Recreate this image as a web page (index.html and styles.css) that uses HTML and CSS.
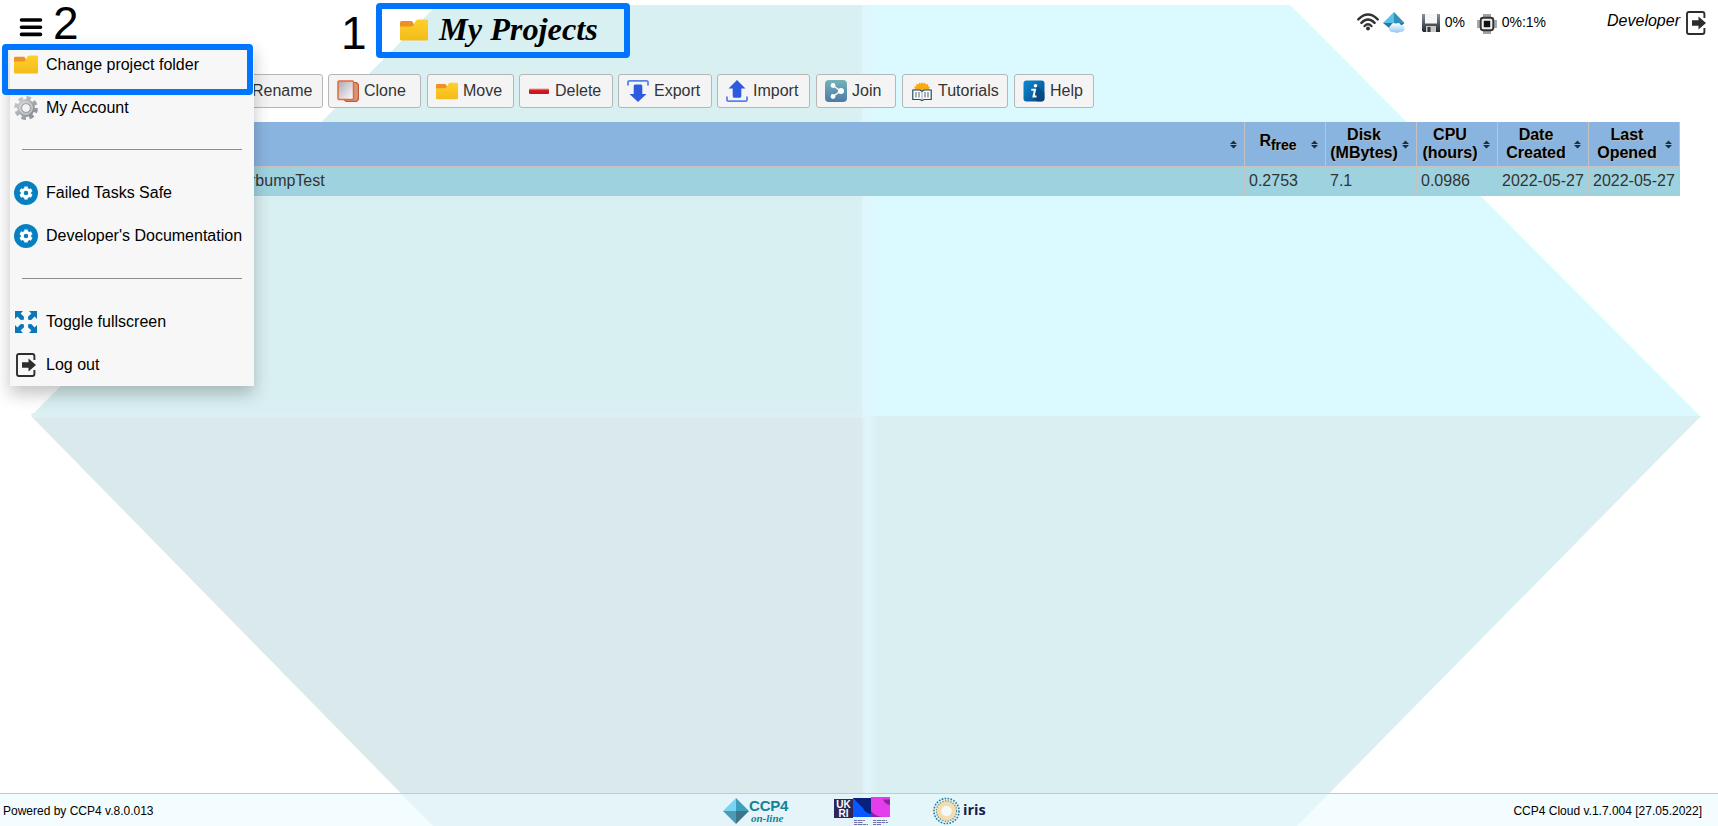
FILE: index.html
```html
<!DOCTYPE html>
<html lang="en">
<head>
<meta charset="utf-8">
<title>CCP4 Cloud - My Projects</title>
<link rel="stylesheet" href="styles.css">
</head>
<body>
<svg class="backdrop" viewBox="0 0 1718 826" aria-hidden="true">
  <defs>
    <linearGradient id="ridge"><stop offset="0" stop-color="#e2f4fa" stop-opacity="0"/><stop offset=".4" stop-color="#e0f6fc"/><stop offset="1" stop-color="#e0f6fc" stop-opacity="0"/></linearGradient>
    <linearGradient id="folderG" x2="0" y2="1"><stop offset="0" stop-color="#ffd02a"/><stop offset="1" stop-color="#f3bb1a"/></linearGradient>
    <linearGradient id="paperG" x1="0" x2="1" y2="1"><stop offset="0" stop-color="#aaa6b4"/><stop offset="1" stop-color="#fff"/></linearGradient>
    <linearGradient id="redG" x2="0" y2="1"><stop offset="0" stop-color="#f4a0a0"/><stop offset=".4" stop-color="#d8121f"/><stop offset="1" stop-color="#c51822"/></linearGradient>
    <linearGradient id="joinG" x2="0" y2="1"><stop offset="0" stop-color="#75b3b5"/><stop offset="1" stop-color="#4c7aa8"/></linearGradient>
    <linearGradient id="helpG" x2="1" y2="1"><stop offset="0" stop-color="#0d8bd6"/><stop offset="1" stop-color="#064684"/></linearGradient>
    <linearGradient id="gearG" x2="1" y2="1"><stop offset="0" stop-color="#c9cdd0"/><stop offset="1" stop-color="#888d91"/></linearGradient>
    <linearGradient id="diskG" x2="0" y2="1"><stop offset="0" stop-color="#8a929d"/><stop offset="1" stop-color="#23272d"/></linearGradient>
    <linearGradient id="cloudG" x2="0" y2="1"><stop offset="0" stop-color="#fff"/><stop offset="1" stop-color="#8ec5f5"/></linearGradient>
  </defs>
  <path fill="#d9f0f2" d="M31 416 437 5H863V416z"/>
  <path fill="#dafaff" d="M863 5H1290L1701 417H863z"/>
  <path fill="#d9e9ec" d="M31 416H863V826H433z"/>
  <path fill="#d9eff2" d="M863 416H1701L1297 826H863z"/>
  <path fill="#dceff5" d="M31 413H863V418H33z"/>
  <path fill="#def8fc" d="M890 379H1663L1667 383H890z" opacity=".6"/>
  <rect x="860" y="5" width="18" height="821" fill="url(#ridge)"/>
</svg>

<svg class="symbols" aria-hidden="true">
  <symbol id="folder" viewBox="0 0 28 22"><path fill="#ee9022" d="M0 3.500Q0 2 1.500 2H12L15 7 12 12H0z"/><path fill="url(#folderG)" d="M0 8.500Q0 7.500 1.500 7.500H11Q12.500 7.500 13.500 6L16 1.500Q17 .4 18.500 .4H26.500Q28 .4 28 2V20Q28 21.600 26.500 21.600H1.500Q0 21.600 0 20z"/></symbol>
  <symbol id="exit" viewBox="0 0 20 24"><path fill="none" stroke="#2d2d2d" stroke-width="1.900" d="M18.400 7V3Q18.400 1 16.400 1H3Q1 1 1 3V21Q1 23 3 23H16.400Q18.400 23 18.400 21V17"/><path fill="#2d2d2d" d="M6 9.300H12.500V5.400L20 12 12.500 18.600V14.700H6z"/></symbol>
  <symbol id="cog" viewBox="0 0 24 24"><circle cx="12" cy="12" r="12" fill="#0780c2"/><circle cx="12" cy="12" r="3.800" fill="none" stroke="#fff" stroke-width="3"/><path stroke="#fff" stroke-width="3.400" d="M12 5.400V8M12 16V18.600M6.300 8.700 8.500 10M15.500 14 17.700 15.300M6.300 15.300 8.500 14M15.500 10 17.700 8.700"/></symbol>
</svg>

<header class="header">
  <svg class="burger" viewBox="0 0 22 19"><path stroke="#000" stroke-width="3.600" stroke-linecap="round" d="M1.500 2H20.500M1.500 9.200H20.500M1.500 16.400H20.500"/></svg>
  <div class="title"><svg class="title-icon"><use href="#folder"/></svg><h1>My Projects</h1></div>
  <div class="status">
    <svg class="wifi" viewBox="0 0 22 18"><g fill="none" stroke="#333" stroke-width="2.500" stroke-linecap="round"><path d="M1.300 6.300Q11-3.300 20.700 6.300M4.400 9.800Q11 3 17.600 9.800M7.600 13Q11 9.500 14.400 13"/></g><circle cx="11" cy="15.600" r="2" fill="#333"/></svg>
    <svg class="cloud" viewBox="0 0 22 21"><path fill="#58c1e4" d="M11 0V11H0z"/><path fill="#3191ba" d="M11 0 21.500 11H11z"/><path fill="#267aa1" d="M0 11H21.500L11 20z"/><path fill="url(#cloudG)" d="M8.500 20A3.600 3.600 0 0 1 7.700 13.500Q9.500 9.800 13 11.600 16.600 9.600 18 13.300 22.500 14 21.500 17.800 20.500 20.500 17.500 19.800 14 21.800 12 20.200z"/></svg>
    <svg class="floppy" viewBox="0 0 18 18"><path fill="url(#diskG)" d="M0 0H18V18H1.200L0 16.600z"/><path fill="#f4f6f7" d="M3 0H15V9.500H3z"/><path fill="#c4c8ca" d="M4 12H14V18H4z"/><path fill="#343434" d="M5.500 13H8.500V18H5.500z"/></svg>
    <span class="stat disk-stat">0%</span>
    <svg class="chip" viewBox="0 0 20 20"><path stroke="#555" stroke-width="1.100" d="M7 0V20M9 0V20M11 0V20M13 0V20M0 7H20M0 9H20M0 11H20M0 13H20"/><rect x="3.700" y="3.700" width="12.600" height="12.600" rx="2.500" fill="#eee" stroke="#333" stroke-width="1.900"/><rect x="6.800" y="6.800" width="6.400" height="6.400" fill="#111"/></svg>
    <span class="stat">0%:1%</span>
  </div>
  <span class="user">Developer</span>
  <svg class="logout"><use href="#exit"/></svg>
</header>

<nav class="toolbar">
  <button class="btn btn-rename">Rename</button>
  <button class="btn btn-clone"><svg viewBox="0 0 22 22"><path fill="#d8957c" stroke="#c85a32" stroke-width="1.200" d="M7 2.500H19.500L21.400 4.500V19.400L19.500 21.400H9L7 19.400z"/><rect x="1" y="1" width="15.500" height="18.500" rx="1" fill="url(#paperG)" stroke="#e56a36" stroke-width="1.500"/></svg>Clone</button>
  <button class="btn btn-move"><svg><use href="#folder"/></svg>Move</button>
  <button class="btn btn-delete"><svg viewBox="0 0 22 22"><rect x="1" y="8.500" width="20" height="5.500" rx="1" fill="url(#redG)"/></svg>Delete</button>
  <button class="btn btn-export"><svg viewBox="0 0 22 22"><path fill="none" stroke="#5582ed" stroke-width="1.800" d="M1 5.500V2Q1 .9 2.500 .9H19.500Q21 .9 21 2V5.500"/><path fill="#2e5ae0" d="M6.700 6Q6.700 4.500 8 4.500H14Q15.300 4.500 15.300 6V14H19.500L11 22 2.500 14H6.700z"/></svg>Export</button>
  <button class="btn btn-import"><svg viewBox="0 0 22 22"><path fill="none" stroke="#5582ed" stroke-width="1.800" d="M1 16.500V20Q1 21.100 2.500 21.100H19.500Q21 21.100 21 20V16.500"/><path fill="#2e5ae0" d="M6.700 16Q6.700 17.800 8 17.800H14Q15.300 17.800 15.300 16V8.500H19.500L11 0 2.500 8.500H6.700z"/></svg>Import</button>
  <button class="btn btn-join"><svg viewBox="0 0 22 22"><rect width="22" height="22" rx="4" fill="url(#joinG)"/><path fill="none" stroke="#fff" stroke-width="1.400" d="M8 5.500 15.500 11 8 16.500"/><g fill="#fff"><circle cx="8" cy="5.500" r="2.400"/><circle cx="16" cy="11" r="3"/><circle cx="8" cy="16.500" r="2.400"/></g></svg>Join</button>
  <button class="btn btn-tutorials"><svg viewBox="0 0 22 22"><path fill="#fba911" d="M2 10 4 8.500 3 6.500 5.200 6.400 5.200 4 7.300 4.500 8.200 2.400 9.800 3.800 11 2 12.300 3.800 14 2.400 14.800 4.500 17 4 17 6.400 19 6.500 18 8.500 20 10.500V12H2z"/><path fill="#fff" stroke="#204d69" stroke-width="1.200" d="M1.800 10H9L11 11.500 13 10H20.200V19.500H13L11 20.500 9 19.500H1.800z"/><path stroke="#8c949b" stroke-width="1.500" d="M5 12V17.500M8 12V17.500M14 12V17.500M17 12V17.500"/><path stroke="#9aa8b3" d="M11 11.500V20"/></svg>Tutorials</button>
  <button class="btn btn-help"><svg viewBox="0 0 22 22"><rect x=".5" y=".5" width="21" height="21" rx="3" fill="url(#helpG)"/><path fill="#063f75" opacity=".55" d="M13 5 21.500 13V19L19 21.500H14L9 17z"/><circle cx="12.500" cy="5.800" r="1.800" fill="#fff"/><path fill="none" stroke="#fff" stroke-width="2" d="M8.300 9.800H12L10.500 16.500H13.500"/></svg>Help</button>
</nav>

<table class="projects">
  <colgroup><col class="c-name"><col class="c-rfree"><col class="c-disk"><col class="c-cpu"><col class="c-date"><col class="c-date"></colgroup>
  <thead><tr>
    <th><div class="head"><span></span><svg viewBox="0 0 8 9"><path d="M0 3.800 4 0 8 3.800zM0 5.200H8L4 9z"/></svg></div></th>
    <th><div class="head rfree"><span>R<sub>free</sub></span><svg viewBox="0 0 8 9"><path d="M0 3.800 4 0 8 3.800zM0 5.200H8L4 9z"/></svg></div></th>
    <th><div class="head"><span>Disk<br>(MBytes)</span><svg viewBox="0 0 8 9"><path d="M0 3.800 4 0 8 3.800zM0 5.200H8L4 9z"/></svg></div></th>
    <th><div class="head"><span>CPU<br>(hours)</span><svg viewBox="0 0 8 9"><path d="M0 3.800 4 0 8 3.800zM0 5.200H8L4 9z"/></svg></div></th>
    <th><div class="head"><span>Date<br>Created</span><svg viewBox="0 0 8 9"><path d="M0 3.800 4 0 8 3.800zM0 5.200H8L4 9z"/></svg></div></th>
    <th><div class="head"><span>Last<br>Opened</span><svg viewBox="0 0 8 9"><path d="M0 3.800 4 0 8 3.800zM0 5.200H8L4 9z"/></svg></div></th>
  </tr></thead>
  <tbody><tr><td class="name">rbumpTest</td><td>0.2753</td><td>7.1</td><td>0.0986</td><td>2022-05-27</td><td>2022-05-27</td></tr></tbody>
</table>

<footer class="footer">
  <span class="powered">Powered by CCP4 v.8.0.013</span>
  <div class="logos">
    <div class="ccp4"><svg viewBox="0 0 26 26"><path fill="#79d4f3" d="M13 0V13H0z"/><path fill="#3d9fbd" d="M13 0 26 13H13z"/><path fill="#4b9bb6" d="M0 13H13V26z"/><path fill="#3d7586" d="M13 13H26L13 26z"/></svg><div class="ccp4-name"><b>CCP4</b><i>on-line</i></div></div>
    <div class="ukri"><div class="ukri-mark"><span>UK</span><span>RI</span></div><svg viewBox="0 0 37 28"><path fill="#0a58ff" d="M0 1H18V20H0z"/><path fill="#08217c" d="M0 1H18V17Q12 16 10 11z"/><path fill="#e33eea" d="M18 0H37V20H18z"/><path fill="#8a2599" d="M18 14Q23 20 31 20H18zM30 2.500H37V8Q32 7 30 2.500z"/><path stroke="#5f659d" stroke-width=".9" stroke-dasharray="3 .6 5 .5" d="M1 23.500H12M1 25.500H10M1 27.500H15M20 23.500H34M20 25.500H35M20 27.500H28"/></svg></div>
    <div class="iris"><svg viewBox="0 0 28 28"><circle cx="14" cy="14" r="8.300" fill="none" stroke="#f3dcae" stroke-width="5.500"/><circle cx="14" cy="14" r="13" fill="none" stroke="#247ba0" stroke-width="1.700" stroke-dasharray="1.700 1.400"/><circle cx="14" cy="14" r="10.500" fill="none" stroke="#5b91a7" stroke-width="1.300" stroke-dasharray="1.300 1.500"/><circle cx="14" cy="14" r="5.200" fill="#f3f9f8"/></svg><b>iris</b></div>
  </div>
  <span class="version">CCP4 Cloud v.1.7.004 [27.05.2022]</span>
</footer>

<div class="menu">
  <div class="item"><svg class="folder"><use href="#folder"/></svg>Change project folder</div>
  <div class="item"><svg viewBox="0 0 24 24"><circle cx="12" cy="12" r="9.900" fill="none" stroke="url(#gearG)" stroke-width="4" stroke-dasharray="4.400 3.375"/><circle cx="12" cy="12" r="6.900" fill="none" stroke="url(#gearG)" stroke-width="4.200"/><circle cx="12" cy="12" r="6.200" fill="none" stroke="#e0e3e5" stroke-width="1"/><circle cx="12" cy="12" r="4.400" fill="#f4f4f4" stroke="#7f858a" stroke-width=".8"/></svg>My Account</div>
  <div class="separator"></div>
  <div class="item"><svg><use href="#cog"/></svg>Failed Tasks Safe</div>
  <div class="item"><svg><use href="#cog"/></svg>Developer's Documentation</div>
  <div class="separator"></div>
  <div class="item"><svg viewBox="0 0 24 24"><g fill="#0b76b8"><path id="arr" d="M1 1H9L6.600 3.400 10 6.800 9.800 9.800 6.800 10 3.400 6.600 1 9z"/><use href="#arr" transform="rotate(90 12 12)"/><use href="#arr" transform="rotate(180 12 12)"/><use href="#arr" transform="rotate(270 12 12)"/></g></svg>Toggle fullscreen</div>
  <div class="item"><svg><use href="#exit"/></svg>Log out</div>
</div>

<div class="mark mark-title"></div>
<div class="mark mark-menu"></div>
<span class="num num-one">1</span>
<span class="num num-two">2</span>
</body>
</html>
```
FILE: styles.css
```css
* { box-sizing: border-box; }
body {
  margin: 0;
  width: 1718px;
  height: 826px;
  overflow: hidden;
  position: relative;
  display: flex;
  flex-direction: column;
  background: #fff;
  color: #000;
  font: 16px "Liberation Sans", Arial, sans-serif;
}
svg { display: block; flex: none; overflow: visible; }
.backdrop { position: absolute; inset: 0; width: 1718px; height: 826px; z-index: -1; }
.symbols { position: absolute; width: 0; height: 0; }

.header { display: flex; align-items: flex-start; height: 74px; padding: 11px 12px 0 20px; white-space: nowrap; }
.burger { width: 22px; height: 19px; margin-top: 7px; }
.title { display: flex; margin-left: 358px; }
.title-icon { width: 28px; height: 22px; margin: 8px 11px 0 0; }
.title h1 { margin: 0; font: italic bold 32.300px/36px "Liberation Serif", "Times New Roman", serif; }
.status { display: flex; margin-left: auto; }
.wifi { width: 22px; height: 18px; margin-top: 2px; }
.cloud { width: 22px; height: 21px; margin: 1px 16px 0 4px; }
.floppy { width: 18px; height: 18px; margin: 3px 5px 0 1px; }
.stat { font-size: 14px; line-height: 22px; }
.disk-stat { width: 32px; }
.chip { width: 20px; height: 20px; margin: 3px 5px 0 0; }
.user { margin-left: 61px; font-style: italic; line-height: 19px; }
.logout { width: 20px; height: 24px; margin-left: 6px; }

.toolbar { display: flex; gap: 5px; height: 34px; padding-left: 200px; }
.btn {
  display: flex; align-items: center; gap: 5px; height: 34px; padding: 0 0 0 8px;
  border: 1px solid #b6b6b6; border-radius: 3px; background: #f4f4f4;
  color: #333; font: 16px "Liberation Sans", Arial, sans-serif;
}
.btn svg { width: 22px; height: 22px; }
.btn-rename { width: 123px; padding-left: 51px; }
.btn-clone { width: 93px; }
.btn-move { width: 87px; margin-left: 1px; }
.btn-delete { width: 94px; }
.btn-export { width: 94px; }
.btn-import { width: 93px; }
.btn-join { width: 80px; margin-left: 1px; }
.btn-tutorials { width: 106px; margin-left: 1px; }
.btn-help { width: 80px; margin-left: 1px; }

.projects { width: 1670px; margin: 14px 0 0 10px; border-collapse: collapse; table-layout: fixed; }
.c-rfree { width: 81px; }
.c-disk { width: 91px; }
.c-cpu { width: 81px; }
.c-date { width: 91px; }
.projects th, .projects td { border-left: 1px solid #c3c3c3; border-right: 1px solid #c3c3c3; }
.projects th { height: 44px; padding: 0; background: #8ab4e0; line-height: 18px; text-shadow: 1px 1px 1px #bbb; }
.head { display: flex; align-items: center; height: 43px; padding: 0 7px 0 0; }
.head span { flex: 1; }
.head svg { width: 7px; height: 9px; margin-top: 2px; fill: #222f38; }
.head sub { font-size: 14px; line-height: 0; }
.rfree span { padding-bottom: 5px; }
.projects td { height: 29px; padding: 0 0 0 4px; background: #9fd2df; border-top: 1px solid #c3c3c3; border-bottom: 1px solid #c3c3c3; color: #333; }
.projects .name { padding-left: 239px; }

.footer {
  display: flex; align-items: center; height: 33px; margin-top: auto; padding: 2px 16px 0 3px;
  border-top: 1px solid #c6c9ca; background: rgba(236, 250, 255, .63); font-size: 12px;
}
.powered { width: 720px; }
.logos { display: flex; align-items: center; }
.ccp4 { display: flex; width: 111px; gap: 0; }
.ccp4 svg { width: 26px; height: 26px; }
.ccp4-name { display: flex; flex-direction: column; color: #168197; }
.ccp4-name b { font-size: 15px; line-height: 15px; letter-spacing: -.2px; }
.ccp4-name i { padding-left: 2px; font: italic bold 11px/10px "Liberation Serif", serif; }
.ukri { display: flex; width: 99px; }
.ukri-mark { display: flex; flex-direction: column; width: 19px; height: 19px; margin-top: 2px; padding-top: 1px; background: #2b2855; color: #fff; font: bold 10px/9px "Liberation Sans", sans-serif; text-align: center; }
.ukri svg { width: 37px; height: 28px; }
.iris { display: flex; align-items: center; gap: 3px; color: #171a49; }
.iris svg { width: 27px; height: 28px; }
.iris b { font: bold 14.500px/18px "Open Sans", sans-serif; margin-top: -3px; }
.version { margin-left: auto; }

.menu { position: absolute; left: 10px; top: 43px; width: 244px; height: 343px; background: #f7f7f7; box-shadow: 0 8px 16px rgba(0, 0, 0, .24); }
.item { display: flex; align-items: center; height: 43px; padding-left: 4px; gap: 8px; }
.item svg { width: 24px; height: 24px; }
.item .folder { height: 19px; }
.separator { height: 42.500px; padding-top: 20px; }
.separator::before { content: ""; display: block; width: 220px; height: 1px; margin-left: 12px; background: #8b8b8b; }

.mark { position: absolute; border: 6px solid #0075ff; border-radius: 4px; }
.mark-title { left: 376px; top: 3px; width: 254px; height: 55px; }
.mark-menu { left: 2px; top: 44px; width: 251px; height: 51px; }
.num { position: absolute; font-size: 46px; line-height: 44px; }
.num-one { left: 341px; top: 11px; }
.num-two { left: 53px; top: 1px; }
```
